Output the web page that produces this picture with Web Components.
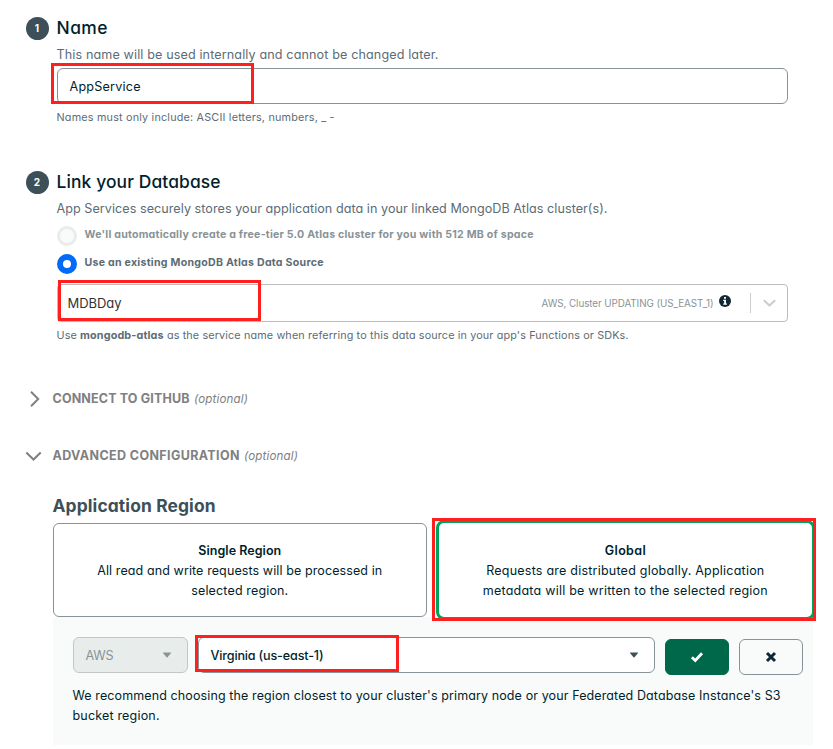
<!DOCTYPE html>
<html lang="en">
<head>
<meta charset="utf-8">
<title>Create an App</title>
<style>
body { margin: 0; background: #fff; }
</style>
</head>
<body>
<app-form></app-form>

<template id="form-template">
  <style>
    :host { display: block; position: relative; width: 833px; height: 749px; overflow: hidden; background: #fff;
      font-family: Inter, "Open Sans", "Liberation Sans", sans-serif; font-feature-settings: "cv11"; color: #001e2b; }
    form-step { margin-left: 25px; }
    .step2 { margin-top: 29px; }
    ui-text.desc { --c: #5c6c75; --s: 12.6px; --h: 20px; }
    ui-text.help { --c: #5c6c75; --s: 10.8px; --h: 16px; }
    .name { margin-top: 4px; }
    .name-help { margin-top: 5px; }
    .db-help { margin-top: 5px; }
    radio-row + radio-row { margin-top: 8px; }
    radio-row { margin-top: 8px; }
    .source { margin-top: 10px; }
    collapse-head { margin-left: 25px; }
    .github { margin-top: 45px; }
    .advanced { margin-top: 37px; }
    .region { display: block; margin: 26px 0 0 53px; height: 30px; --s: 17.4px; --h: 30px; --w: 650; --c: #3d4f58; --dy: 0px; }
    .cards { display: flex; gap: 9px; margin-left: 53px; align-items: flex-start; }
    .cards choice-card:last-child { margin-top: -1px; }
    .panel { margin: -3px 0 0 53px; width: 760px; height: 128px; box-sizing: border-box; background: #f9fbfa; padding: 20px 10px 0 20px; }
    .controls { display: flex; gap: 10px; height: 38px; }
    .controls action-button { margin-top: 2px; }
    .note { margin-top: 10px; --s: 12.5px; --h: 20px; display: flex; flex-direction: column; align-items: flex-start; }
    mark-box { z-index: 5; }
  </style>
  <form-step number="1">
    <ui-text slot="title" fit="51">Name</ui-text>
    <ui-text class="desc" fit="382">This name will be used internally and cannot be changed later.</ui-text>
    <text-field class="name"><ui-text fit="71">AppService</ui-text></text-field>
    <ui-text class="help name-help" fit="278">Names must only include: ASCII letters, numbers, _ -</ui-text>
  </form-step>
  <form-step number="2" class="step2">
    <ui-text slot="title" fit="164">Link your Database</ui-text>
    <ui-text class="desc" fit="551">App Services securely stores your application data in your linked MongoDB Atlas cluster(s).</ui-text>
    <radio-row disabled><ui-text fit="449">We'll automatically create a free-tier 5.0 Atlas cluster for you with 512 MB of space</ui-text></radio-row>
    <radio-row checked><ui-text fit="239">Use an existing MongoDB Atlas Data Source</ui-text></radio-row>
    <source-select class="source">
      <ui-text fit="54">MDBDay</ui-text>
      <ui-text slot="meta" fit="172">AWS, Cluster UPDATING (US_EAST_1)</ui-text>
    </source-select>
    <ui-text class="help db-help" fit="572">Use <b>mongodb-atlas</b> as the service name when referring to this data source in your app's Functions or SDKs.</ui-text>
  </form-step>
  <collapse-head class="github"><ui-text fit="137">CONNECT TO GITHUB</ui-text></collapse-head>
  <collapse-head class="advanced" open><ui-text fit="187">ADVANCED CONFIGURATION</ui-text></collapse-head>
  <ui-text class="region" fit="163">Application Region</ui-text>
  <div class="cards">
    <choice-card><ui-text slot="title" fit="83">Single Region</ui-text><ui-text fit="285">All read and write requests will be processed in</ui-text><ui-text fit="97">selected region.</ui-text></choice-card>
    <choice-card selected><ui-text slot="title" fit="41">Global</ui-text><ui-text fit="278">Requests are distributed globally. Application</ui-text><ui-text fit="285">metadata will be written to the selected region</ui-text></choice-card>
  </div>
  <div class="panel">
    <div class="controls">
      <drop-select disabled style="width:115px"><ui-text fit="28">AWS</ui-text></drop-select>
      <drop-select style="width:457px"><ui-text fit="113">Virginia (us-east-1)</ui-text></drop-select>
      <action-button kind="confirm"></action-button>
      <action-button kind="cancel"></action-button>
    </div>
    <div class="note"><ui-text fit="708">We recommend choosing the region closest to your cluster's primary node or your Federated Database Instance's S3</ui-text><ui-text fit="87">bucket region.</ui-text></div>
  </div>
  <mark-box style="left:51px;top:63px;width:203px;height:41px"></mark-box>
  <mark-box style="left:58px;top:280px;width:203px;height:41px"></mark-box>
  <mark-box style="left:432px;top:518px;width:384px;height:103px"></mark-box>
  <mark-box style="left:195px;top:635px;width:204px;height:37px"></mark-box>
</template>

<script>
function define(name, html, after) {
  customElements.define(name, class extends HTMLElement {
    connectedCallback() {
      if (this.shadowRoot) return;
      const root = this.attachShadow({ mode: 'open' });
      root.innerHTML = typeof html === 'function' ? html(this) : html;
      if (after) after(this);
    }
  });
}

define('form-step', el => `
<style>
:host{display:block;padding-top:14px}
.head{display:grid;grid-template-columns:24px 1fr;column-gap:8px;align-items:center;height:28px;--s:17.4px;--h:28px;--w:540;--dy:0px}
.badge{width:23px;height:23px;margin-left:.5px;border-radius:50%;background:#3d4f58;color:#fff;font-size:10px;font-weight:700;line-height:22px;text-align:center}
.body{margin-left:32px;padding-top:2px;display:flex;flex-direction:column;align-items:flex-start}
</style>
<div class="head"><div class="badge">${el.getAttribute('number')}</div><slot name="title"></slot></div>
<div class="body"><slot></slot></div>`);

define('text-field', `
<style>:host{display:flex;align-items:center;box-sizing:border-box;width:731px;height:36px;border:1px solid #889397;border-radius:6px;padding-left:12px;--s:12.6px;--h:20px}</style><slot></slot>`);

define('radio-row', el => {
  const on = el.hasAttribute('checked');
  return `
<style>
:host{display:flex;gap:8px;height:20px;align-items:center;--s:10.6px;--h:16px;--w:700;--c:${on ? '#5c6c75' : '#889397'}}
.dot{width:20px;height:20px;box-sizing:border-box;border-radius:50%;border:${on ? '6px solid #016bf8' : '3px solid #e8edeb'};background:${on ? '#fff' : '#f9fbfa'}}
.label{margin-top:-4px;height:16px}
</style><span class="dot"></span><span class="label"><slot></slot></span>`;
});

define('source-select', `
<style>
:host{display:flex;align-items:center;box-sizing:border-box;width:731px;height:38px;border:1px solid #bdbdbd;border-radius:4px;padding:0 11px 0 10px;--s:13px;--h:20px;--c:#333;--dy:0px}
.meta{margin-left:auto;--s:9.8px;--h:16px;--c:#889397;--dy:1px;height:16px}
.info{margin:-4px 0 0 5.5px;width:12px;height:12px}
.bar{width:1px;height:20px;background:#ccc;margin:0 12px 0 19px}
svg{display:block;flex:none}
</style>
<slot></slot><span class="meta"><slot name="meta"></slot></span>
<svg class="info" viewBox="0 0 12 12"><circle cx="6" cy="6" r="6" fill="#112733"/><path fill="#fff" d="M5 1.9h2v1.8H5zM4.2 4.8H7v3.7h.9v1.3H4.2V8.5h.9V6.1h-.9z"/></svg>
<span class="bar"></span>
<svg width="13" height="9" viewBox="0 0 13 9"><path d="M1.4 1.8 6.5 6.6l5.1-4.8" fill="none" stroke="#ccc" stroke-width="2" stroke-linecap="round" stroke-linejoin="round"/></svg>`);

define('collapse-head', el => `
<style>
:host{display:grid;grid-template-columns:18px auto auto;column-gap:0;height:20px;align-items:center;justify-content:start;--s:12.5px;--h:20px;--w:680;--c:#808080;--dy:0px}
.title{margin-left:10px;height:20px}
.opt{margin:1px 0 0 5px;height:20px;--s:11.6px;--w:400;font-style:italic}
svg{display:block}
</style>
<svg width="18" height="20" viewBox="0 0 18 20" fill="none" stroke="#808080" stroke-width="2"><path d="${el.hasAttribute('open') ? 'M1.3 6.5 8.5 13.5l7.2-7' : 'M6 2.8 13.2 10 6 17.2'}"/></svg>
<span class="title"><slot></slot></span><span class="opt"><ui-text fit="54">(optional)</ui-text></span>`);

define('choice-card', el => {
  const on = el.hasAttribute('selected');
  return `
<style>
:host{display:flex;flex-direction:column;align-items:center;box-sizing:border-box;flex:none;background:#fff;width:${on ? 379 : 374}px;height:${on ? 100 : 94}px;margin-top:2px;padding-top:${on ? 17 : 16}px;border:${on ? '3px solid #00a35c' : '1px solid #889397'};border-radius:${on ? 8 : 6}px;--s:12.5px;--h:20px}
.t{height:20px;--w:600}
</style><span class="t"><slot name="title"></slot></span><slot></slot>`;
});

define('drop-select', el => {
  const off = el.hasAttribute('disabled');
  return `
<style>
:host{display:flex;align-items:center;justify-content:space-between;box-sizing:border-box;height:36px;flex:none;padding:0 15px 0 12px;border-radius:6px;border:1px solid ${off ? '#c1c7c6' : '#889397'};background:${off ? '#e8edeb' : '#fff'};--s:12.6px;--h:20px;--w:${off ? 400 : 500};--c:${off ? '#889397' : '#001e2b'}}
</style><slot></slot><svg width="10" height="6" viewBox="0 0 10 6"><path d="M1.2.4h7.6q.6 0 .2.6L5.5 5.3q-.5.5-1 0L1 1Q.6.4 1.2.4z" fill="${off ? '#889397' : '#3d4f58'}"/></svg>`;
});

define('action-button', el => {
  const ok = el.getAttribute('kind') === 'confirm';
  return `
<style>:host{display:flex;align-items:center;justify-content:center;box-sizing:border-box;flex:none;width:64px;height:36px;border-radius:6px;border:1px solid ${ok ? '#00684a' : '#889397'};background:${ok ? '#00684a' : '#f9fbfa'}}</style>
<svg width="14" height="12" viewBox="0 0 14 12" fill="none">${ok
  ? '<path d="M1.9 6.3 5.3 9.5 12 2.3" stroke="#fff" stroke-width="2.8"/>'
  : '<path d="M3 2 11 10M11 2 3 10" stroke="#112733" stroke-width="3"/>'}</svg>`;
});

define('mark-box', `<style>:host{position:absolute;box-sizing:border-box;border:3px solid #ff1f1f;pointer-events:none}</style>`);

customElements.define('app-form', class extends HTMLElement {
  connectedCallback() {
    this.attachShadow({ mode: 'open' }).append(document.getElementById('form-template').content.cloneNode(true));
  }
});

// Single text line whose tracking is adjusted so that it spans "fit" pixels.
define('ui-text', `
<style>:host{display:block;white-space:nowrap;font-size:var(--s,13px);line-height:var(--h,20px);font-weight:var(--w,400);color:var(--c,#001e2b);height:var(--h,20px)}span{display:inline-block;vertical-align:top;margin-left:-.5px;margin-top:var(--dy,1px)}</style><span><slot></slot></span>`,
  el => {
    const span = el.shadowRoot.querySelector('span');
    const n = el.textContent.length - 1;
    const gap = (Number(el.getAttribute('fit')) - span.getBoundingClientRect().width) / n;
    span.style.letterSpacing = gap.toFixed(3) + 'px';
    span.style.marginRight = (-gap).toFixed(3) + 'px';
  });
</script>
</body>
</html>
